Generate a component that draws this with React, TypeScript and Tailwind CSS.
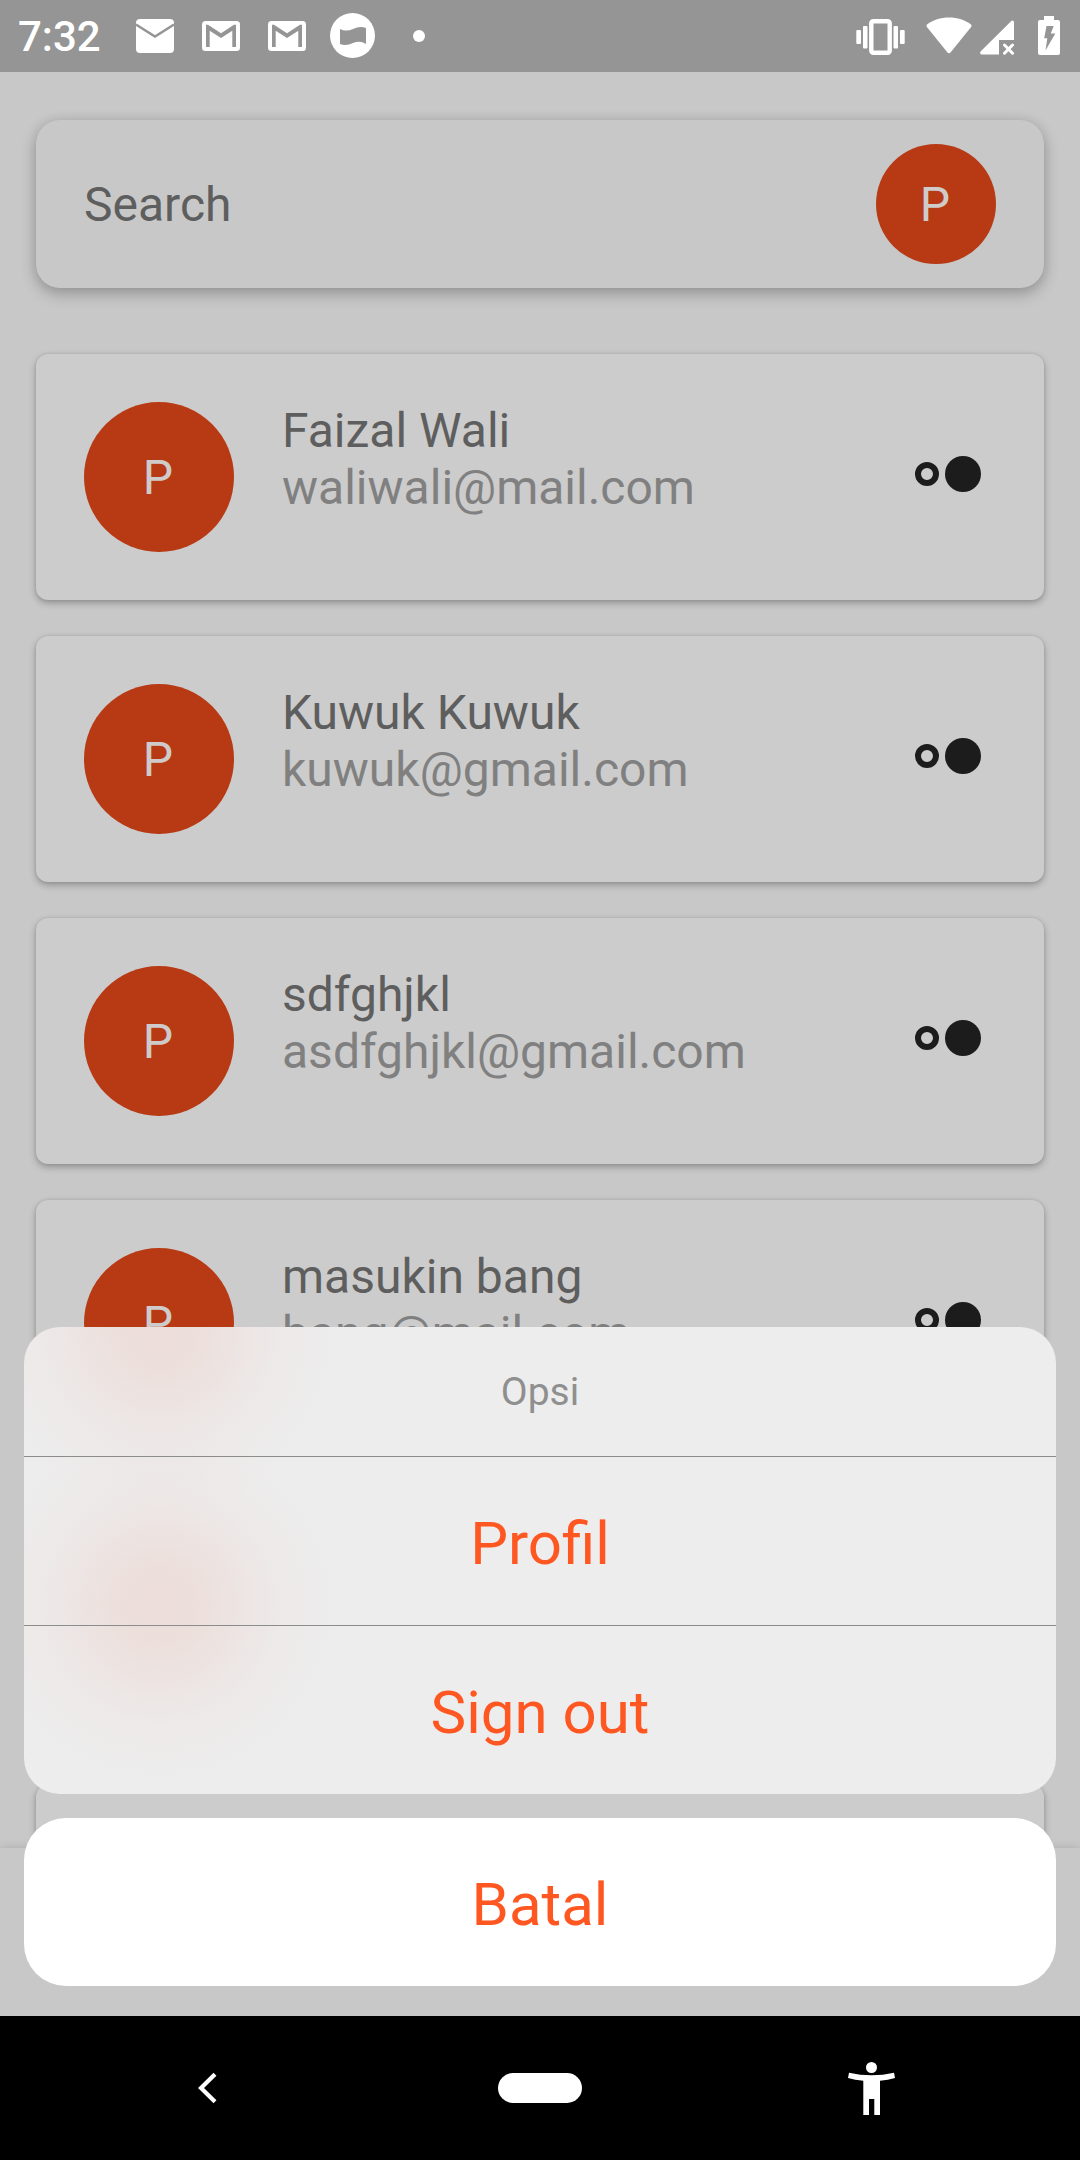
import React from "react";

type Contact = { name?: string; email?: string; height: string };

const contacts: Contact[] = [
  { name: "Faizal Wali", email: "waliwali@mail.com", height: "h-[246px]" },
  { name: "Kuwuk Kuwuk", email: "kuwuk@gmail.com", height: "h-[246px]" },
  { name: "sdfghjkl", email: "asdfghjkl@gmail.com", height: "h-[246px]" },
  { name: "masukin bang", email: "bang@mail.com", height: "h-[246px]" },
  { height: "h-[267px]" },
  { height: "h-[246px]" },
];

function GmailIcon() {
  return (
    <svg width="38" height="30" viewBox="0 0 38 30" className="shrink-0">
      <rect width="38" height="30" rx="3.5" fill="#fff" />
      <path d="M4 26V3.8H6L19 12.2L32 3.8H34V26H30.3V9.8L19 17L7.7 9.8V26Z" fill="#959595" />
    </svg>
  );
}

function StatusBar() {
  return (
    <header className="flex h-[72px] shrink-0 items-center bg-[#959595] pl-[18px] pr-[20px] text-white">
      <span className="w-[118px] pt-[2px] text-[42px] leading-[72px] font-medium">7:32</span>
      <svg width="38" height="36" viewBox="0 0 38 36" className="shrink-0">
        <rect y="1" width="38" height="34" rx="4" fill="#fff" />
        <path d="M0 6.5L19 18.5L38 6.5" fill="none" stroke="#959595" strokeWidth="2.4" />
      </svg>
      <div className="ml-[28px] flex gap-[28px]">
        <GmailIcon />
        <GmailIcon />
      </div>
      <svg width="45" height="45" viewBox="0 0 45 45" className="-mt-px ml-[24px] shrink-0">
        <circle cx="22.5" cy="22.5" r="22.5" fill="#fff" />
        <path d="M10 16Q16 19 23 16Q30 12.5 36 15V31Q30 27 23 30Q16 33.5 10 31Z" fill="#959595" />
      </svg>
      <span className="ml-[38px] size-[12px] rounded-full bg-white" />
      <div className="ml-auto flex items-center">
        <svg width="49" height="36" viewBox="0 0 49 36" className="mt-[2px] shrink-0">
          <g fill="#fff">
            <rect x="0.3" y="11" width="4.7" height="14" rx="1" />
            <rect x="7" y="7" width="4.5" height="22.5" rx="1" />
            <rect x="37.5" y="7" width="4.5" height="22.5" rx="1" />
            <rect x="44" y="11" width="4.7" height="14" rx="1" />
          </g>
          <rect x="15.3" y="2.3" width="18.4" height="31.4" rx="2" fill="none" stroke="#fff" strokeWidth="4.4" />
        </svg>
        <svg width="46" height="37" viewBox="0 0 46 37" className="-mt-[2px] ml-[21px] shrink-0">
          <path d="M23 .5C14.5 .5 7 3 1.3 7.2Q-.2 8.4 .9 9.9L21.3 35.3Q23 37.2 24.7 35.3L45.1 9.9Q46.2 8.4 44.7 7.2C39 3 31.5 .5 23 .5Z" fill="#fff" />
        </svg>
        <svg width="35" height="35" viewBox="0 0 35 35" className="mt-[2px] ml-[8px] shrink-0">
          <path d="M34 2V20H19V34.5H1.5Q-.8 33.5 .8 31.3L31.3 .9Q33.5 -.4 34 2Z" fill="#fff" />
          <path d="M24.5 25L32.5 33.2M32.5 25L24.5 33.2" stroke="#fff" strokeWidth="3" strokeLinecap="round" />
        </svg>
        <svg width="22" height="39" viewBox="0 0 22 39" className="-mt-px ml-[23px] shrink-0">
          <path d="M6 0H16V4H20Q22 4 22 6V37Q22 39 20 39H2Q0 39 0 37V6Q0 4 2 4H6Z" fill="#fff" />
          <path d="M8.5 10H15.7L12.8 17.6H17.3L7.5 34.5L9.3 22.2H6.2Z" fill="#959595" />
        </svg>
      </div>
    </header>
  );
}

function Avatar({ size }: { size: string }) {
  return (
    <div className={`flex shrink-0 items-center justify-center rounded-full bg-[#b83a14] pr-[2px] text-[48px] leading-[57px] text-[#cfcbca] ${size}`}>
      P
    </div>
  );
}

function ContactCard({ name, email, height }: Contact) {
  return (
    <article className={`flex shrink-0 rounded-[12px] bg-[#cccccc] p-[48px] shadow-[0_3px_7px_rgba(0,0,0,0.28),0_0_3px_rgba(0,0,0,0.10)] ${height}`}>
      <Avatar size="size-[150px]" />
      <div className="ml-[48px] text-[48px] leading-[57px] whitespace-nowrap">
        <p className="text-[#5e5e5e]">{name}</p>
        <p className="text-[#808080]">{email}</p>
      </div>
      <div className="mt-[54px] mr-[15px] ml-auto flex h-[36px] items-center gap-[6px]">
        <span className="size-[24px] rounded-full border-[6px] border-[#1c1c1c]" />
        <span className="size-[36px] rounded-full bg-[#1c1c1c]" />
      </div>
    </article>
  );
}

function ActionSheet() {
  return (
    <div className="absolute inset-x-[24px] top-[1327px] flex flex-col gap-[24px] text-center text-[60px] text-[#ff5722]">
      <div className="flex h-[467px] flex-col overflow-hidden rounded-[36px] bg-[#ededed] bg-[radial-gradient(circle_at_135px_278px,rgba(235,190,178,0.34)_0px,rgba(235,190,178,0.29)_40px,rgba(235,190,178,0.18)_80px,rgba(235,190,178,0.08)_120px,rgba(235,190,178,0.02)_160px,transparent_190px),radial-gradient(circle_at_135px_4px,rgba(235,190,178,0.34)_0px,rgba(235,190,178,0.29)_40px,rgba(235,190,178,0.18)_80px,rgba(235,190,178,0.08)_120px,rgba(235,190,178,0.02)_160px,transparent_190px)]">
        <p className="h-[129px] text-[39px] leading-[130px] text-[#8f8f8f]">Opsi</p>
        <button className="h-[169px] border-t border-[#8c8c8c] pt-[3px] leading-[168px]">Profil</button>
        <button className="h-[169px] border-t border-[#8c8c8c] pt-[3px] leading-[168px]">Sign out</button>
      </div>
      <button className="h-[168px] rounded-[42px] bg-white pt-[3px] leading-[168px]">Batal</button>
    </div>
  );
}

function NavigationBar() {
  return (
    <nav className="grid h-[144px] shrink-0 grid-cols-[416px_248px_416px] items-center bg-black">
      <svg width="20" height="32" viewBox="0 0 20 32" className="ml-[198px]">
        <path d="M17 2.2L3 16L17 29.8" fill="none" stroke="#fff" strokeWidth="4.2" />
      </svg>
      <span className="h-[30px] w-[84px] justify-self-center rounded-full bg-white" />
      <svg width="48" height="54" viewBox="0 0 48 54" className="mt-[2px] ml-[184px]">
        <circle cx="23.5" cy="5.5" r="5.5" fill="#fff" />
        <path d="M1 10.8Q23.5 15.8 46 10.8L47 16Q40 18 32 18.7V53H26.3V37H21V53H15.3V18.7Q7 18 0 16Z" fill="#fff" />
      </svg>
    </nav>
  );
}

export default function App() {
  return (
    <div className="relative flex h-[2160px] w-[1080px] flex-col overflow-hidden bg-[#c8c8c8] font-['Roboto',sans-serif]">
      <StatusBar />
      <main className="flex h-[1776px] shrink-0 flex-col overflow-hidden px-[36px] pt-[48px]">
        <div className="flex h-[168px] shrink-0 items-center justify-between rounded-[24px] bg-[#c8c8c8] px-[48px] shadow-[0_6px_16px_rgba(0,0,0,0.24),0_0_12px_rgba(0,0,0,0.08)]">
          <span className="text-[48px] leading-[57px] text-[#5e5e5e]">Search</span>
          <Avatar size="size-[120px]" />
        </div>
        <section className="mt-[66px] flex flex-col gap-[36px]">
          {contacts.map((contact, index) => (
            <ContactCard key={index} {...contact} />
          ))}
        </section>
      </main>
      <div className="relative h-[168px] shrink-0 bg-[#c8c8c8] shadow-[0_0_9px_rgba(0,0,0,0.15)]" />
      <NavigationBar />
      <ActionSheet />
    </div>
  );
}
